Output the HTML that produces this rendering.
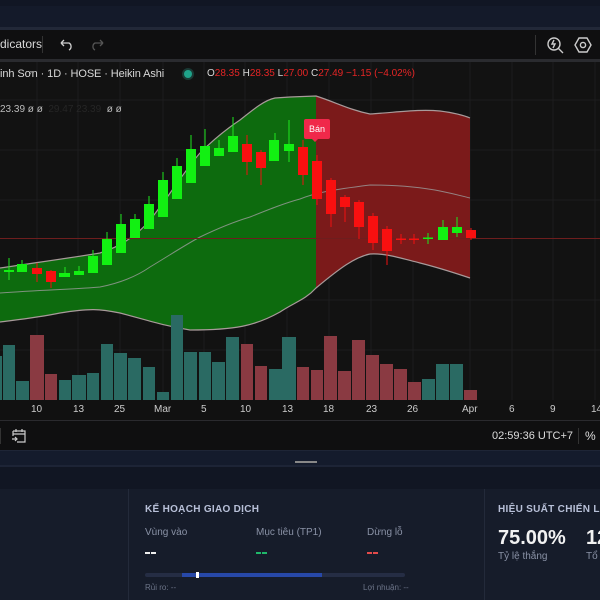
<!DOCTYPE html>
<html><head><meta charset="utf-8"><style>
*{margin:0;padding:0;box-sizing:border-box}
body{width:600px;height:600px;overflow:hidden;background:#121212;font-family:"Liberation Sans",sans-serif;position:relative}
.a{position:absolute;white-space:nowrap}
</style></head><body>
<div class="a" style="left:0;top:0;width:600px;height:30px;background:#141a2a;border-top:6px solid #111624;border-bottom:3px solid #222838"></div>
<div class="a" style="left:0;top:30px;width:600px;height:29px;background:#0f0f10"></div>
<div class="a" style="left:0;top:37px;font-size:12px;color:#d8d8d8">dicators</div>
<div class="a" style="left:42px;top:36px;width:1px;height:17px;background:#333"></div>
<svg class="a" style="left:58px;top:37px" width="50" height="16" viewBox="0 0 50 16"><path d="M3 6h8a4 4 0 0 1 0 7M3 6l3-3M3 6l3 3" stroke="#cfcfcf" stroke-width="1.3" fill="none"/><path d="M45 6h-8a4 4 0 0 0 0 7M45 6l-3-3M45 6l-3 3" stroke="#555" stroke-width="1.3" fill="none"/></svg>
<div class="a" style="left:535px;top:35px;width:1px;height:20px;background:#333"></div>
<svg class="a" style="left:545px;top:34px" width="52" height="22" viewBox="0 0 52 22"><circle cx="9" cy="10" r="6" stroke="#ccc" stroke-width="1.4" fill="none"/><path d="M13 14l5 5M9 6l-2 4h3l-2 4" stroke="#ccc" stroke-width="1.4" fill="none"/><path d="M34 4h8l4 7-4 7h-8l-4-7z" stroke="#ccc" stroke-width="1.4" fill="none"/><circle cx="38" cy="11" r="2.6" stroke="#ccc" stroke-width="1.4" fill="none"/></svg>
<div class="a" style="left:0;top:59px;width:600px;height:3px;background:#2a2b2f"></div>

<svg class="a" style="left:0;top:62px" width="600" height="338" viewBox="0 62 600 338">
<g stroke="#1c1c1e" stroke-width="1">
<path d="M37 62V400M78 62V400M120 62V400M163 62V400M204 62V400M245 62V400M287 62V400M329 62V400M371 62V400M413 62V400M470 62V400M512 62V400M553 62V400M595 62V400M0 100H600M0 150H600M0 200H600M0 300H600M0 350H600"/>
</g>
<path d="M0 268 C40 262 70 258 100 253 C125 245 140 232 150 220 C170 195 185 170 200 153 C215 138 228 128 240 120 C255 108 265 100 275 98 L290 97 L316 96 L316 288 C305 300 295 302 280 312 C255 326 235 330 190 330 C165 326 150 321 120 313 C100 309 90 308 60 313 C35 318 15 320 0 322Z" fill="#0d6b0e"/>
<path d="M316 96 C335 102 350 110 370 114 C400 112 420 109 440 111 C455 113 463 115 470 118 L470 278 C455 273 440 268 420 263 C400 258 385 253 370 254 C355 257 340 268 316 288Z" fill="#7b1a1a"/>
<path d="M0 268 C40 262 70 258 100 253 C125 245 140 232 150 220 C170 195 185 170 200 153 C215 138 228 128 240 120 C255 108 265 100 275 98 L290 97 L316 96 C335 102 350 110 370 114 C400 112 420 109 440 111 C455 113 463 115 470 118" stroke="#a89a9a" stroke-width="1.2" fill="none"/>
<path d="M0 322 C15 320 35 318 60 313 C90 308 100 309 120 313 C150 321 165 326 190 330 C235 330 255 326 280 312 C295 302 305 300 316 288 C340 268 355 257 370 254 C385 253 400 258 420 263 C440 268 455 273 470 278" stroke="#a89a9a" stroke-width="1.2" fill="none"/>
<path d="M0 293 C40 290 80 289 100 287 C125 282 140 274 150 267 C170 255 185 245 200 237 C225 225 240 220 250 217 C270 209 285 203 300 199 C315 193 330 190 370 185 C400 185 420 187 440 191 C455 194 462 196 470 198" stroke="#9c9c9c" stroke-width="1" fill="none" opacity=".8"/>
<path d="M0 238.5H600" stroke="#6e1e1e" stroke-width="1"/>
<g fill="#2a6a63">
<rect x="0" y="356" width="2" height="44"/><rect x="3" y="345" width="12" height="55"/><rect x="16" y="381" width="13" height="19"/><rect x="59" y="380" width="12" height="20"/><rect x="72" y="375" width="14" height="25"/><rect x="87" y="373" width="12" height="27"/><rect x="101" y="344" width="12" height="56"/><rect x="114" y="353" width="13" height="47"/><rect x="128" y="358" width="13" height="42"/><rect x="143" y="367" width="12" height="33"/><rect x="157" y="392" width="12" height="8"/><rect x="171" y="315" width="12" height="85"/><rect x="184" y="352" width="13" height="48"/><rect x="199" y="352" width="12" height="48"/><rect x="212" y="362" width="13" height="38"/><rect x="226" y="337" width="13" height="63"/><rect x="269" y="369" width="13" height="31"/><rect x="282" y="337" width="14" height="63"/><rect x="422" y="379" width="13" height="21"/><rect x="436" y="364" width="13" height="36"/><rect x="450" y="364" width="13" height="36"/>
</g>
<g fill="#8a3a42">
<rect x="30" y="335" width="14" height="65"/><rect x="45" y="374" width="12" height="26"/><rect x="241" y="344" width="12" height="56"/><rect x="255" y="366" width="12" height="34"/><rect x="297" y="367" width="12" height="33"/><rect x="311" y="370" width="12" height="30"/><rect x="324" y="336" width="13" height="64"/><rect x="338" y="371" width="13" height="29"/><rect x="352" y="340" width="13" height="60"/><rect x="366" y="355" width="13" height="45"/><rect x="380" y="364" width="13" height="36"/><rect x="394" y="369" width="13" height="31"/><rect x="408" y="382" width="13" height="18"/><rect x="464" y="390" width="13" height="10"/>
</g>
<g stroke="#1ee81e" stroke-width="1"><path d="M9 258V280M22 260V272M65 267V277M79 266V275M93 250V273M107 232V265M121 214V253M135 214V238M149 196V229M163 172V216M177 158V199M191 135V183M205 129V166M219 140V156M233 117V152M275 133V161M289 120V162M428 233V244M443 220V240M457 217V237"/></g>
<g stroke="#f01010" stroke-width="1"><path d="M37 263V282M51 270V288M247 135V175M261 150V185M303 140V185M317 155V205M331 178V227M345 195V222M359 200V239M373 213V250M387 226V265M401 234V244M414 234V244M471 228V240"/></g>
<g fill="#12f012">
<rect x="4" y="270" width="10" height="2"/><rect x="17" y="264" width="10" height="8"/><rect x="59" y="273" width="11" height="4"/><rect x="74" y="271" width="10" height="4"/><rect x="88" y="256" width="10" height="17"/><rect x="102" y="239" width="10" height="26"/><rect x="116" y="224" width="10" height="29"/><rect x="130" y="219" width="10" height="19"/><rect x="144" y="204" width="10" height="25"/><rect x="158" y="180" width="10" height="37"/><rect x="172" y="166" width="10" height="33"/><rect x="186" y="149" width="10" height="34"/><rect x="200" y="146" width="10" height="20"/><rect x="214" y="148" width="10" height="8"/><rect x="228" y="136" width="10" height="16"/><rect x="269" y="140" width="10" height="21"/><rect x="284" y="144" width="10" height="7"/><rect x="423" y="237.5" width="10" height="1.5"/><rect x="438" y="227" width="10" height="13"/><rect x="452" y="227" width="10" height="6"/>
</g>
<g fill="#f81010">
<rect x="32" y="268" width="10" height="6"/><rect x="46" y="271" width="10" height="11"/><rect x="242" y="144" width="10" height="18"/><rect x="256" y="152" width="10" height="16"/><rect x="298" y="147" width="10" height="28"/><rect x="312" y="161" width="10" height="38"/><rect x="326" y="180" width="10" height="34"/><rect x="340" y="197" width="10" height="10"/><rect x="354" y="202" width="10" height="25"/><rect x="368" y="216" width="10" height="27"/><rect x="382" y="229" width="10" height="22"/><rect x="396" y="238.5" width="10" height="1.5"/><rect x="409" y="238.5" width="10" height="1.5"/><rect x="466" y="230" width="10" height="8"/>
</g>
<path d="M306 119h22a2 2 0 0 1 2 2v16a2 2 0 0 1-2 2h-10l-3 3-3-3h-6a2 2 0 0 1-2-2v-16a2 2 0 0 1 2-2z" fill="#f0284a"/>
<text x="317" y="132" font-size="9" fill="#fff" text-anchor="middle" font-family="Liberation Sans">Bán</text>
</svg>
<div class="a" style="left:0;top:68px;font-size:11px;color:#d8d8d8;letter-spacing:-0.1px">inh Sơn · 1D · HOSE · Heikin Ashi</div>
<div class="a" style="left:184px;top:70px;width:8px;height:8px;border-radius:50%;background:#1fa38a;box-shadow:0 0 0 2px #1a3a35"></div>
<div class="a" style="left:207px;top:68px;font-size:10px;color:#d8d8d8">O<span style="color:#e52525">28.35</span> H<span style="color:#e52525">28.35</span> L<span style="color:#e52525">27.00</span> C<span style="color:#e52525">27.49</span> <span style="color:#e52525">−1.15 (−4.02%)</span></div>
<div class="a" style="left:0;top:104px;font-size:10px;color:#bbb">23.39 ø ø <span style="color:#262626">&nbsp;29.47 23.39&nbsp;</span> ø ø</div>

<div class="a" style="left:0;top:400px;width:600px;height:20px;background:#111;font-size:10px;color:#ccc">
<span class="a" style="left:31px;top:4px">10</span><span class="a" style="left:73px;top:4px">13</span><span class="a" style="left:114px;top:4px">25</span><span class="a" style="left:154px;top:4px">Mar</span><span class="a" style="left:201px;top:4px">5</span><span class="a" style="left:240px;top:4px">10</span><span class="a" style="left:282px;top:4px">13</span><span class="a" style="left:323px;top:4px">18</span><span class="a" style="left:366px;top:4px">23</span><span class="a" style="left:407px;top:4px">26</span><span class="a" style="left:462px;top:4px">Apr</span><span class="a" style="left:509px;top:4px">6</span><span class="a" style="left:550px;top:4px">9</span><span class="a" style="left:591px;top:4px">14</span></div>
<div class="a" style="left:0;top:420px;width:600px;height:1px;background:#2a2a2e"></div>
<div class="a" style="left:0;top:421px;width:600px;height:29px;background:#0f0f10"></div>
<div class="a" style="left:0;top:428px;width:1px;height:16px;background:#333"></div>
<svg class="a" style="left:10px;top:427px" width="18" height="18" viewBox="0 0 18 18"><path d="M3 4h12v11H7M3 4v5M3 7h12M6 2v3M12 2v3M2 12h5M5 10l2 2-2 2" stroke="#ccc" stroke-width="1.2" fill="none"/></svg>
<div class="a" style="left:492px;top:430px;font-size:11px;color:#ddd">02:59:36 UTC+7</div>
<div class="a" style="left:578px;top:428px;width:1px;height:16px;background:#333"></div>
<div class="a" style="left:585px;top:429px;font-size:12px;color:#ddd">%</div>
<div class="a" style="left:0;top:450px;width:600px;height:15px;background:#141b2c;border-top:1px solid #1e2536"></div>
<div class="a" style="left:295px;top:461px;width:22px;height:2px;background:#888"></div>
<div class="a" style="left:0;top:465px;width:600px;height:24px;background:#111623;border-top:2px solid #1d2436"></div>
<div class="a" style="left:0;top:489px;width:600px;height:111px;background:#161c2a"></div>
<div class="a" style="left:128px;top:489px;width:1px;height:111px;background:#232a3a"></div>
<div class="a" style="left:484px;top:489px;width:1px;height:111px;background:#232a3a"></div>
<div class="a" style="left:145px;top:504px;font-size:10px;font-weight:bold;color:#b8c0d8;letter-spacing:.3px">KẾ HOẠCH GIAO DỊCH</div>
<div class="a" style="left:145px;top:527px;font-size:10px;color:#8a92a6">Vùng vào</div>
<div class="a" style="left:256px;top:527px;font-size:10px;color:#8a92a6">Mục tiêu (TP1)</div>
<div class="a" style="left:367px;top:527px;font-size:10px;color:#8a92a6">Dừng lỗ</div>
<div class="a" style="left:145px;top:552px;width:5px;height:2px;background:#eee"></div><div class="a" style="left:151px;top:552px;width:5px;height:2px;background:#eee"></div>
<div class="a" style="left:256px;top:552px;width:5px;height:2px;background:#1fb86a"></div><div class="a" style="left:262px;top:552px;width:5px;height:2px;background:#1fb86a"></div>
<div class="a" style="left:367px;top:552px;width:5px;height:2px;background:#e24a4a"></div><div class="a" style="left:373px;top:552px;width:5px;height:2px;background:#e24a4a"></div>
<div class="a" style="left:145px;top:573px;width:260px;height:4px;background:#252d44;border-radius:2px"></div>
<div class="a" style="left:182px;top:573px;width:140px;height:4px;background:#2748a8"></div>
<div class="a" style="left:196px;top:572px;width:3px;height:6px;background:#fff"></div>
<div class="a" style="left:145px;top:583px;font-size:8px;color:#6c7488">Rủi ro: --</div>
<div class="a" style="left:363px;top:583px;font-size:8px;color:#6c7488">Lợi nhuận: --</div>
<div class="a" style="left:498px;top:504px;font-size:10px;font-weight:bold;color:#b8c0d8;letter-spacing:.3px">HIỆU SUẤT CHIẾN LƯ</div>
<div class="a" style="left:498px;top:527px;font-size:20px;font-weight:bold;color:#f2f2f2">75.00%</div>
<div class="a" style="left:586px;top:527px;font-size:20px;font-weight:bold;color:#f2f2f2">12</div>
<div class="a" style="left:498px;top:551px;font-size:10px;color:#8a92a6">Tỷ lệ thắng</div>
<div class="a" style="left:586px;top:551px;font-size:10px;color:#8a92a6">Tổ</div>
</body></html>
